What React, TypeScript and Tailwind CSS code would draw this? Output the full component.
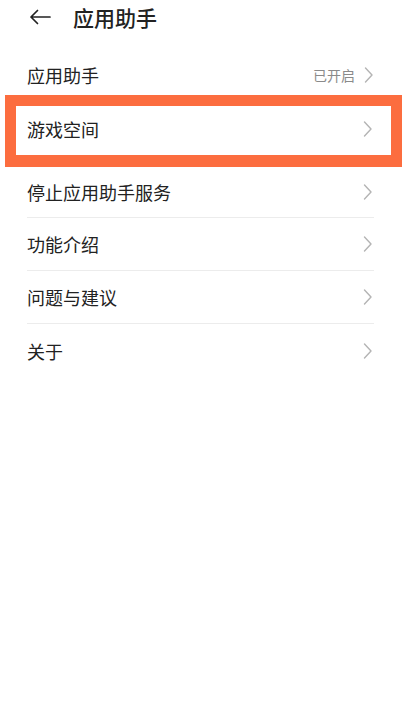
import React from "react";

const FONT = { fontFamily: '"Noto Sans CJK SC", "Noto Sans", sans-serif' };

function Chevron() {
  return (
    <svg width="9" height="16" viewBox="0 0 9 16" fill="none" className="shrink-0">
      <path d="M1.5 1 L8 8 L1.5 15" stroke="#b4b4b4" strokeWidth="1.4" strokeLinecap="round" strokeLinejoin="round" />
    </svg>
  );
}

function BackArrow() {
  return (
    <svg width="22" height="16" viewBox="0 0 22 16" fill="none">
      <path d="M21 8 H2 M8.5 1.5 L2 8 L8.5 14.5" stroke="#222" strokeWidth="1.7" strokeLinecap="round" strokeLinejoin="round" />
    </svg>
  );
}

const rows = ["停止应用助手服务", "功能介绍", "问题与建议", "关于"];

export default function App() {
  return (
    <div className="h-[710px] w-full bg-white text-[#222]" style={FONT}>
      {/* header */}
      <div className="flex h-[34px] items-center pl-[29px]">
        <BackArrow />
        <span className="ml-[22px] text-[21px] font-medium leading-none">应用助手</span>
      </div>

      {/* 应用助手 switch row */}
      <div className="mt-[21px] flex h-[40px] items-center justify-between pl-[27px] pr-[37px]">
        <span className="text-[18px] leading-none">应用助手</span>
        <div className="flex items-center gap-[9px]">
          <span className="text-[14px] leading-none text-[#8a8a8a]">已开启</span>
          <Chevron />
        </div>
      </div>

      {/* highlighted row */}
      <div className="ml-[5px] w-[397px] border-[11px] border-b-[12px] border-[#fc6d3f] bg-white">
        <div className="flex h-[49px] items-center justify-between pb-[3px] pl-[11px] pr-[19px]">
          <span className="text-[18px] leading-none">游戏空间</span>
          <Chevron />
        </div>
      </div>

      {/* remaining rows */}
      <div className="ml-[27px] mr-[36px]">
        {rows.map((r, i) => (
          <div
            key={r}
            className={`flex items-center justify-between pr-[2px] ${i === 0 ? "h-[51px]" : "h-[53px]"} ${i < rows.length - 1 ? "border-b border-[#ececec]" : ""}`}
          >
            <span className="text-[18px] leading-none">{r}</span>
            <Chevron />
          </div>
        ))}
      </div>
    </div>
  );
}
